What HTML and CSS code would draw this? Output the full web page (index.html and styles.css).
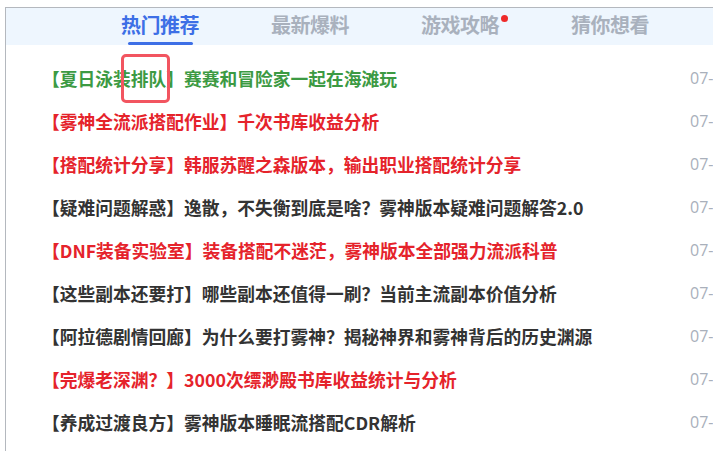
FILE: index.html
```html
<!DOCTYPE html>
<html lang="zh-CN">
<head>
<meta charset="utf-8">
<title>热门推荐</title>
<link rel="stylesheet" href="styles.css">
</head>
<body>
<div class="panel">
  <div class="tabs">
    <div class="tab active"><span class="tab-text">热门推荐</span><span class="tab-line"></span></div>
    <div class="tab"><span class="tab-text">最新爆料</span></div>
    <div class="tab"><span class="tab-text dot">游戏攻略</span></div>
    <div class="tab"><span class="tab-text">猜你想看</span></div>
  </div>
  <ul class="list">
    <li class="row"><span class="title green">【夏日泳装排队】赛赛和冒险家一起在海滩玩</span><span class="date">07-</span><span class="mark"></span></li>
    <li class="row"><span class="title red">【雾神全流派搭配作业】千次书库收益分析</span><span class="date">07-</span></li>
    <li class="row"><span class="title red">【搭配统计分享】韩服苏醒之森版本，输出职业搭配统计分享</span><span class="date">07-</span></li>
    <li class="row"><span class="title">【疑难问题解惑】逸散，不失衡到底是啥？雾神版本疑难问题解答2.0</span><span class="date">07-</span></li>
    <li class="row"><span class="title red">【DNF装备实验室】装备搭配不迷茫，雾神版本全部强力流派科普</span><span class="date">07-</span></li>
    <li class="row"><span class="title">【这些副本还要打】哪些副本还值得一刷？当前主流副本价值分析</span><span class="date">07-</span></li>
    <li class="row"><span class="title">【阿拉德剧情回廊】为什么要打雾神？揭秘神界和雾神背后的历史渊源</span><span class="date">07-</span></li>
    <li class="row"><span class="title red">【完爆老深渊？】3000次缥渺殿书库收益统计与分析</span><span class="date">07-</span></li>
    <li class="row"><span class="title">【养成过渡良方】雾神版本睡眠流搭配CDR解析</span><span class="date">07-</span></li>
  </ul>
</div>
</body>
</html>
```

FILE: styles.css
```css
html, body {
  margin: 0;
  padding: 0;
  background: #ffffff;
  overflow: hidden;
}

body {
  font-family: "Noto Sans CJK SC", "Noto Sans", sans-serif;
}

.panel {
  margin: 7px 0 0 5px;
  width: 707px;
  height: 443px;
  border-top: 1px solid #b4b8be;
  border-left: 1px solid #b4b8be;
  overflow: hidden;
}

.tabs {
  display: flex;
  height: 37px;
  background: #eef6fe;
  padding-left: 79px;
  box-sizing: border-box;
}

.tab {
  width: 150px;
  display: flex;
  flex-direction: column;
  align-items: center;
  padding-top: 4px;
}

.tab-text {
  position: relative;
  font-size: 20px;
  line-height: 26px;
  font-weight: 700;
  color: #a9b1bd;
  letter-spacing: -0.5px;
}

.tab.active .tab-text {
  color: #3d6fe6;
}

.tab-line {
  width: 65px;
  height: 3px;
  border-radius: 2px;
  background: #3d6fe6;
  margin-top: 4px;
}

.dot::after {
  content: "";
  position: absolute;
  right: -9px;
  top: 3px;
  width: 7px;
  height: 7px;
  border-radius: 50%;
  background: #ee2a2a;
}

.list {
  list-style: none;
  margin: 0;
  padding: 11px 0 0 0;
}

.row {
  position: relative;
  display: flex;
  align-items: center;
  height: 43px;
  padding-left: 36px;
}

.title {
  flex: 0 0 648px;
  font-size: 17.75px;
  font-weight: 700;
  color: #333333;
  white-space: nowrap;
}

.title.green {
  color: #3c9a43;
}

.title.red {
  color: #e5232b;
}

.date {
  flex: 0 0 auto;
  font-size: 16px;
  color: #a9b0bb;
  font-family: "Open Sans", "Noto Sans", sans-serif;
}

.mark {
  position: absolute;
  left: 115px;
  top: -2px;
  width: 49px;
  height: 49px;
  box-sizing: border-box;
  border: 3px solid #f25560;
  border-radius: 5px;
}
```
